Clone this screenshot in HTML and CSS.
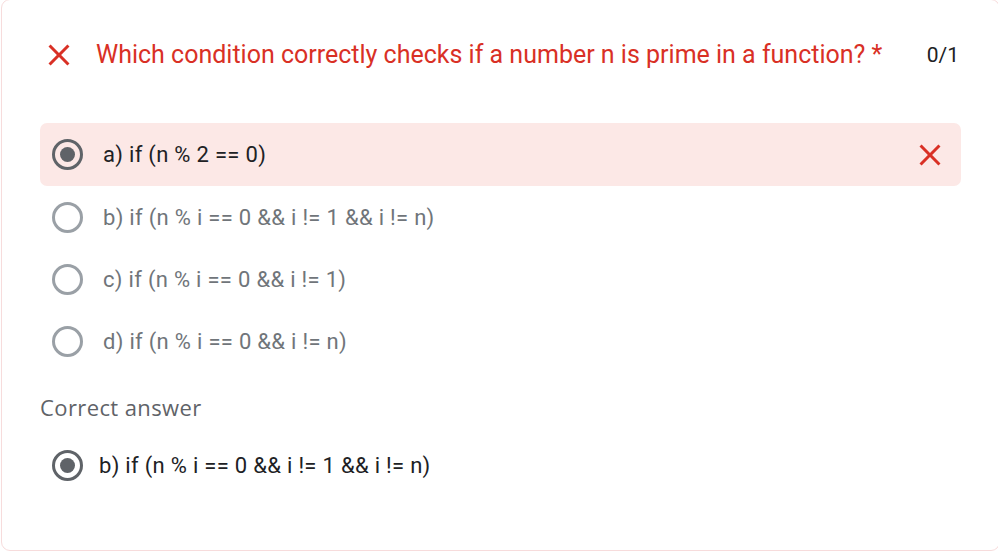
FILE: index.html
```html
<!DOCTYPE html>
<html>
<head>
<meta charset="utf-8">
<link rel="stylesheet" href="styles.css">
</head>
<body>
<div class="card">
  <div class="header">
    <svg class="x-icon" viewBox="0 0 24 24"><path d="M19 6.41L17.59 5 12 10.59 6.41 5 5 6.41 10.59 12 5 17.59 6.41 19 12 13.41 17.59 19 19 17.59 13.41 12z"/></svg>
    <div class="title">Which condition correctly checks if a number n is prime in a function? *</div>
    <div class="score">0/1</div>
  </div>
  <div class="options">
    <div class="option wrong">
      <span class="radio checked"></span>
      <span class="label">a) if (n % 2 == 0)</span>
      <svg class="x-icon row-x" viewBox="0 0 24 24"><path d="M19 6.41L17.59 5 12 10.59 6.41 5 5 6.41 10.59 12 5 17.59 6.41 19 12 13.41 17.59 19 19 17.59 13.41 12z"/></svg>
    </div>
    <div class="option">
      <span class="radio"></span>
      <span class="label">b) if (n % i == 0 &amp;&amp; i != 1 &amp;&amp; i != n)</span>
    </div>
    <div class="option">
      <span class="radio"></span>
      <span class="label">c) if (n % i == 0 &amp;&amp; i != 1)</span>
    </div>
    <div class="option">
      <span class="radio"></span>
      <span class="label">d) if (n % i == 0 &amp;&amp; i != n)</span>
    </div>
  </div>
  <div class="correct-title">Correct answer</div>
  <div class="correct-option">
    <span class="radio checked"></span>
    <span class="label">b) if (n % i == 0 &amp;&amp; i != 1 &amp;&amp; i != n)</span>
  </div>
</div>
</body>
</html>
```

FILE: styles.css
```css
html, body {
  margin: 0;
  padding: 0;
  background: #ffffff;
  overflow: hidden;
}
body {
  width: 998px;
  height: 551px;
  font-family: Roboto, "Liberation Sans", Arial, sans-serif;
}
.card {
  box-sizing: border-box;
  margin: -1px 0 0 1px;
  width: 999px;
  height: 552px;
  border: 1px solid #f7dcdc;
  border-radius: 9px;
  padding: 37px 38px 0 38px;
  background: #fff;
}
.header {
  display: flex;
  align-items: center;
  height: 36px;
}
.x-icon {
  width: 36px;
  height: 36px;
  fill: #d93025;
  flex: none;
}
.header .x-icon {
  margin-left: 1px;
}
.title {
  margin-left: 19px;
  flex: 1;
  color: #d93025;
  font-size: 25px;
  line-height: 36px;
  letter-spacing: 0;
}
.score {
  color: #202124;
  font-size: 21px;
  line-height: 36px;
  margin-right: 2px;
}
.options {
  margin-top: 50px;
  display: flex;
  flex-direction: column;
}
.option {
  display: flex;
  align-items: center;
  height: 62px;
  padding: 0 13px 0 12px;
  border-radius: 7px;
}
.option.wrong {
  background: #fce8e6;
  height: 63px;
}
.radio {
  box-sizing: border-box;
  width: 31px;
  height: 31px;
  border-radius: 50%;
  border: 3px solid #9aa0a6;
  flex: none;
  display: flex;
  align-items: center;
  justify-content: center;
}
.radio.checked {
  border-color: #5f6368;
}
.radio.checked::after {
  content: "";
  width: 15px;
  height: 15px;
  border-radius: 50%;
  background: #5f6368;
}
.label {
  margin-left: 20px;
  flex: 1;
  font-size: 22px;
  letter-spacing: 0.3px;
  color: #70757a;
}
.option.wrong .label {
  color: #202124;
}
.row-x {
  margin-left: auto;
}
.correct-title {
  margin-top: 20px;
  font-family: "Open Sans", "Noto Sans", sans-serif;
  font-size: 22px;
  letter-spacing: 0.4px;
  line-height: 30px;
  color: #5f6368;
}
.correct-option {
  display: flex;
  align-items: center;
  height: 62px;
  margin-top: 12px;
  padding-left: 12px;
}
.correct-option .label {
  margin-left: 16px;
  color: #202124;
}
```
